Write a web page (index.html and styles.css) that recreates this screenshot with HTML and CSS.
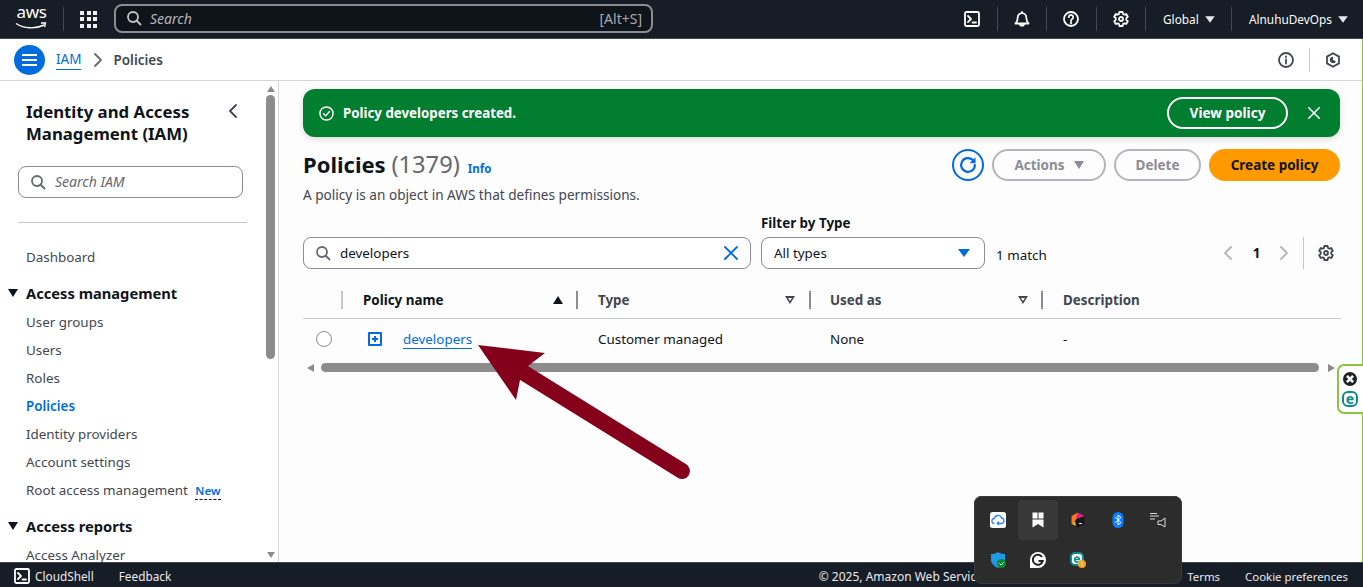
FILE: index.html
```html
<!DOCTYPE html>
<html lang="en">
<head>
<meta charset="utf-8">
<title>Policies | IAM</title>
<link rel="stylesheet" href="styles.css">
</head>
<body>
<svg class="sprite" aria-hidden="true">
  <symbol id="i-search" viewBox="0 0 16 16"><circle cx="7" cy="7" r="5"/><path d="m14.5 14.5-4-4"/></symbol>
  <symbol id="i-close" viewBox="0 0 16 16"><path d="m2 2 12 12M14 2 2 14"/></symbol>
  <symbol id="i-gear" viewBox="0 0 16 16"><path d="M6.4 1h3.2l.4 2 1.3.7 1.9-.7 1.6 2.8-1.5 1.3v1.8l1.5 1.3-1.6 2.8-1.9-.7-1.3.7-.4 2H6.4l-.4-2-1.3-.7-1.9.7-1.6-2.8 1.5-1.3V7.1L1.2 5.8 2.8 3l1.9.7L6 3z"/><circle cx="8" cy="8" r="2"/></symbol>
  <symbol id="i-shell" viewBox="0 0 16 16"><rect x="1" y="1" width="14" height="14" rx="1.5"/><path d="m4 5 3 3-3 3M8.5 11.5H12"/></symbol>
  <symbol id="i-bell" viewBox="0 0 16 16"><path d="M8 2.2A4.3 4.3 0 0 0 3.7 6.5c0 3-1.2 5-2.2 6h13c-1-1-2.200-3-2.200-6A4.300 4.300 0 0 0 8 2.200ZM8 2.200V1M6 12.700a2 2 0 0 0 4 0"/></symbol>
  <symbol id="i-help" viewBox="0 0 16 16"><circle cx="8" cy="8" r="7"/><path d="M5.800 6.200a2.200 2.200 0 1 1 3.400 1.800C8.400 8.500 8 9 8 10M8 11.500v1"/></symbol>
  <symbol id="i-info" viewBox="0 0 16 16"><circle cx="8" cy="8" r="7"/><path d="M8 7.500v4M8 4.300v.7"/></symbol>
  <symbol id="i-hex" viewBox="0 0 16 16"><path d="M8 1.200 14 4.600v6.800l-6 3.400-6-3.400V4.600z"/><path class="fill" d="M8 4.800A3.200 3.200 0 1 0 11 9.200L8 8z"/></symbol>
  <symbol id="i-left" viewBox="0 0 16 16"><path d="m11 2-6 6 6 6"/></symbol>
  <symbol id="i-right" viewBox="0 0 16 16"><path d="m5 2 6 6-6 6"/></symbol>
  <symbol id="i-refresh" viewBox="0 0 16 16"><path d="M13.500 8a5.500 5.500 0 1 1-1.800-4.100L13 5"/><path class="fill" d="M14 1.800v4.700H9.300z"/></symbol>
</svg>

<header class="topnav">
  <div class="aws-logo">
    <span class="aws-word">aws</span>
    <svg class="aws-smile" viewBox="0 0 32 8"><path d="M1 1.500c8 5.500 20 5.500 28 1.500"/><path d="M26 1h4.500l-1 4"/></svg>
  </div>
  <span class="nav-sep"></span>
  <div class="apps-grid" aria-label="Services">
    <i></i><i></i><i></i><i></i><i></i><i></i><i></i><i></i><i></i>
  </div>
  <div class="nav-search">
    <svg class="ico ico-16 st-light"><use href="#i-search"/></svg>
    <span class="nav-search-text">Search</span>
    <span class="nav-search-key">[Alt+S]</span>
  </div>
  <nav class="nav-actions">
    <div class="nav-cell"><svg class="ico ico-16 st-white"><use href="#i-shell"/></svg></div>
    <div class="nav-cell sep"><svg class="ico ico-16 st-white"><use href="#i-bell"/></svg></div>
    <div class="nav-cell sep"><svg class="ico ico-16 st-white"><use href="#i-help"/></svg></div>
    <div class="nav-cell sep"><svg class="ico ico-16 st-white"><use href="#i-gear"/></svg></div>
    <div class="nav-cell sep nav-text nav-region"><span>Global</span><b class="caret caret-white"></b></div>
    <div class="nav-cell sep nav-text nav-user"><span>AlnuhuDevOps</span><b class="caret caret-white"></b></div>
  </nav>
</header>

<div class="shell">
  <div class="crumbbar">
    <button class="menu-btn" aria-label="Open navigation"><i></i><i></i><i></i></button>
    <a class="crumb-link">IAM</a>
    <svg class="ico ico-16 st-grey crumb-chevron"><use href="#i-right"/></svg>
    <span class="crumb-current">Policies</span>
    <div class="crumb-tools">
      <svg class="ico ico-16 st-dark"><use href="#i-info"/></svg>
      <span class="crumb-sep"></span>
      <svg class="ico ico-16 st-dark"><use href="#i-hex"/></svg>
    </div>
  </div>

  <div class="workspace">
    <aside class="sidebar">
      <div class="side-scroll">
        <div class="side-head">
          <h2>Identity and Access Management (IAM)</h2>
          <svg class="ico ico-16 st-dark"><use href="#i-left"/></svg>
        </div>
        <div class="side-search">
          <svg class="ico ico-16 st-grey"><use href="#i-search"/></svg>
          <span>Search IAM</span>
        </div>
        <hr class="side-rule">
        <a class="side-link first">Dashboard</a>
        <div class="side-section"><b class="caret caret-dark"></b>Access management</div>
        <a class="side-link">User groups</a>
        <a class="side-link">Users</a>
        <a class="side-link">Roles</a>
        <a class="side-link active">Policies</a>
        <a class="side-link">Identity providers</a>
        <a class="side-link">Account settings</a>
        <a class="side-link">Root access management <span class="badge-new">New</span></a>
        <div class="side-section second"><b class="caret caret-dark"></b>Access reports</div>
        <a class="side-link">Access Analyzer</a>
      </div>
      <div class="vscroll">
        <b class="tri tri-up"></b>
        <span class="vthumb"></span>
        <b class="tri tri-down"></b>
      </div>
    </aside>

    <main class="content">
      <div class="flash">
        <svg class="flash-check" viewBox="0 0 16 16"><circle cx="8" cy="8" r="7"/><path d="m4.800 8.200 2.300 2.300 4.100-4.600"/></svg>
        <span class="flash-text">Policy developers created.</span>
        <button class="flash-btn">View policy</button>
        <svg class="ico ico-14 st-white"><use href="#i-close"/></svg>
      </div>

      <div class="page-head">
        <div class="page-title">
          <h1>Policies <span class="count">(1379)</span></h1>
          <a class="info-link">Info</a>
        </div>
        <div class="page-actions">
          <button class="refresh"><svg class="ico ico-20 st-blue"><use href="#i-refresh"/></svg></button>
          <button class="btn btn-off btn-actions">Actions <b class="caret caret-grey"></b></button>
          <button class="btn btn-off btn-delete">Delete</button>
          <button class="btn btn-primary">Create policy</button>
        </div>
      </div>
      <p class="page-desc">A policy is an object in AWS that defines permissions.</p>

      <div class="filters">
        <div class="filter-search">
          <svg class="ico ico-16 st-grey"><use href="#i-search"/></svg>
          <span class="filter-value">developers</span>
          <svg class="ico ico-16 st-blue"><use href="#i-close"/></svg>
        </div>
        <div class="filter-type">
          <label>Filter by Type</label>
          <div class="select"><span>All types</span><b class="caret caret-blue"></b></div>
        </div>
        <span class="matches">1 match</span>
        <div class="pager">
          <svg class="ico ico-16 st-pale"><use href="#i-left"/></svg>
          <b>1</b>
          <svg class="ico ico-16 st-pale"><use href="#i-right"/></svg>
          <span class="pager-sep"></span>
          <svg class="ico ico-16 st-dark"><use href="#i-gear"/></svg>
        </div>
      </div>

      <div class="table">
        <div class="t-row t-head">
          <div class="t-cell t-sel"></div>
          <div class="t-cell sep-light spread sorted">Policy name <b class="tri tri-sort"></b></div>
          <div class="t-cell sepl spread">Type <b class="sort-open"></b></div>
          <div class="t-cell sepl spread">Used as <b class="sort-open"></b></div>
          <div class="t-cell sepl">Description</div>
        </div>
        <div class="t-row t-body">
          <div class="t-cell t-sel"><span class="radio"></span></div>
          <div class="t-cell name-cell"><span class="expand"><i></i></span><a class="policy-link">developers</a></div>
          <div class="t-cell">Customer managed</div>
          <div class="t-cell">None</div>
          <div class="t-cell">-</div>
        </div>
      </div>
      <div class="hscroll">
        <b class="tri tri-left"></b>
        <span class="hthumb"></span>
        <b class="tri tri-right"></b>
      </div>
    </main>
  </div>
</div>

<footer class="footer">
  <svg class="ico ico-16 st-white"><use href="#i-shell"/></svg>
  <span class="foot-shell">CloudShell</span>
  <span class="foot-feedback">Feedback</span>
  <span class="foot-copy">© 2025, Amazon Web Services, Inc. or its affiliates.</span>
  <span class="foot-privacy">Privacy</span>
  <span class="foot-terms">Terms</span>
  <span>Cookie preferences</span>
</footer>

<svg class="big-arrow" viewBox="0 0 225 145" aria-hidden="true">
  <path d="M8 5 75 13 58 26 50 40 46 60z" class="arrow-head"/>
  <path d="M54 33 212 131" class="arrow-tail"/>
</svg>

<div class="eset-tab">
  <span class="eset-close"><svg viewBox="0 0 16 16"><path d="m4.500 4.500 7 7M11.500 4.500l-7 7"/></svg></span>
  <span class="eset-e">e</span>
</div>

<div class="tray">
  <div class="tray-cell"><svg viewBox="0 0 16 16"><rect width="16" height="16" rx="2.500" fill="#fff"/><path d="M4.500 11.500a2.500 2.500 0 0 1-.2-5A3.800 3.800 0 0 1 11.600 6a2.800 2.800 0 0 1 .2 5.500H7.500m1.500-2-1.700 2 1.700 1.500" fill="none" stroke="#3b82f6" stroke-width="1.300"/></svg></div>
  <div class="tray-cell on"><svg viewBox="0 0 16 16"><path d="M2.500 .5h5v6h-5zM8.500 .5h5v6h-5zM2.500 7.500h11V15.500L8 12l-5.500 3.500z" fill="#fff"/></svg></div>
  <div class="tray-cell"><svg viewBox="0 0 16 16"><path d="m8 .5 6.500 3.500v8L8 15.500 1.500 12V4z" fill="#17171c"/><path d="M1.500 4 8 .5 7 6 5 9 1.500 12z" fill="#ff7a1e"/><path d="M8 .5 14.500 4 8 6.500 6 5z" fill="#e0218a"/><path d="M1.500 12 5 9 6 14z" fill="#f5b21e"/><path d="M9 11.500h3" stroke="#fff"/></svg></div>
  <div class="tray-cell"><svg viewBox="0 0 16 16"><rect x="2.500" width="11" height="16" rx="5.500" fill="#0a7cff"/><path d="m5 5 6 5.500L8 13V3l3 2.500L5 11" fill="none" stroke="#fff"/></svg></div>
  <div class="tray-cell"><svg viewBox="0 0 16 16"><path d="M0 1.500h7M0 4h9M0 7h5" stroke="#ddd" fill="none"/><path d="M8 9h3l4-3v9l-4-2.500H8z" stroke="#ddd" fill="none"/></svg></div>
  <div class="tray-cell"><svg viewBox="0 0 16 16"><path d="M8 0c2 1.500 4 2 7 2v6c0 3.500-3 6-7 8-4-2-7-4.500-7-8V2c3 0 5-.5 7-2z" fill="#1e9be8"/><circle cx="11.500" cy="11.500" r="4.500" fill="#0f8a2e"/><path d="m9.500 11.500 1.500 1.500 2.500-2.500" stroke="#fff" fill="none"/></svg></div>
  <div class="tray-cell"><svg viewBox="0 0 16 16"><path d="M8 0a8 8 0 0 1 0 16H0V8a8 8 0 0 1 8-8z" fill="#fff"/><path d="M12 5a5 5 0 1 0 .700 4H8.500" fill="none" stroke="#222" stroke-width="2"/></svg></div>
  <div class="tray-cell"><svg viewBox="0 0 16 16"><rect x="1" y="1" width="12" height="12" rx="4" fill="#fff" stroke="#0b8a94" stroke-width="2"/><path d="M4.500 7.500h5a2.500 2.500 0 1 0-.8 2" fill="none" stroke="#0b8a94" stroke-width="1.600"/><circle cx="12" cy="12" r="4" fill="#f5a623"/><path d="M12 10v2.500M12 13.500v.7" stroke="#fff"/></svg></div>
</div>
</body>
</html>
```

FILE: styles.css
```css
* { box-sizing: border-box; }
html, body { height: 100%; }
body {
  margin: 0;
  display: flex;
  flex-direction: column;
  height: 587px;
  overflow: hidden;
  position: relative;
  font-family: "Noto Sans", "Open Sans", sans-serif;
  font-size: 13.4px;
  color: #0f141a;
  background: #fff;
}
.sprite { display: none; }
button { font-family: inherit; margin: 0; padding: 0; background: none; border: 0; }
h1, h2, p { margin: 0; }

.ico { flex: none; fill: none; stroke-width: 1.8; stroke-linecap: round; stroke-linejoin: round; display: block; }
.ico-14 { width: 14px; height: 14px; }
.ico-16 { width: 16px; height: 16px; }
.ico-20 { width: 20px; height: 20px; }
.st-white { stroke: #fff; }
.st-light { stroke: #c6c6cd; }
.st-grey { stroke: #656871; }
.st-dark { stroke: #424650; color: #424650; }
.st-pale { stroke: #b4b4bb; }
.st-blue { stroke: #006ce0; color: #006ce0; }
.fill { fill: currentColor; stroke: none; }

.caret { display: inline-block; width: 0; height: 0; border-left: 5px solid transparent; border-right: 5px solid transparent; border-top: 7px solid #fff; }
.caret-white { border-top-color: #e8e8ec; }
.caret-dark { border-top-color: #0f141a; }
.caret-grey { border-top-color: #8c8c94; }
.caret-blue { border-left-width: 6px; border-right-width: 6px; border-top: 8px solid #006ce0; }

/* top nav */
.topnav {
  flex: none;
  height: 39px;
  display: flex;
  align-items: center;
  background: #161d26;
  border-bottom: 1px solid #424650;
  color: #fbfbfb;
  padding-left: 15px;
}
.aws-logo { width: 33px; height: 28px; position: relative; margin-top: -2px; }
.aws-word { display: block; font-size: 17px; line-height: 20px; letter-spacing: -0.3px; color: #fff; margin-top: -2px; text-align: center; }
.aws-smile { display: block; width: 32px; height: 8px; fill: none; stroke: #fff; stroke-width: 1.4; }
.nav-sep { width: 1px; height: 24px; background: #424650; margin-left: 15px; }
.apps-grid { display: grid; grid-template-columns: repeat(3, 4px); grid-auto-rows: 4px; gap: 2.500px; margin-left: 16px; width: 17px; }
.apps-grid i { background: #f0f0f0; }
.nav-search {
  margin: 0 0 2px 17px;
  width: 539px;
  height: 29px;
  display: flex;
  align-items: center;
  background: #0f141a;
  border: 2px solid #8c8c94;
  border-radius: 8px;
  padding: 0 9px 0 10px;
}
.nav-search-text { font-style: italic; color: #b4b4bb; margin-left: 8px; font-size: 14px; }
.nav-search-key { margin-left: auto; color: #a9a9b2; font-size: 14px; }
.nav-actions { margin-left: auto; display: flex; align-items: center; height: 100%; }
.nav-cell { width: 49.500px; height: 24px; display: flex; align-items: center; justify-content: center; }
.nav-cell.sep { border-left: 1px solid #424650; }
.nav-text { justify-content: flex-start; font-size: 11.800px; gap: 5px; }
.nav-region { width: 86px; padding-left: 17px; }
.nav-user { width: 132px; padding-left: 17px; }
.nav-text .caret { transform: scale(.95); margin-left: 1px; }

/* wrapper with the thin green edge */
.shell { flex: 1; min-height: 0; display: flex; flex-direction: column; border-right: 1px solid #8bc53f; }

.crumbbar {
  flex: none;
  height: 42px;
  display: flex;
  align-items: center;
  padding: 0 21px 0 14px;
  border-bottom: 1px solid #d5d5da;
  background: #fff;
}
.menu-btn { width: 31px; height: 30px; border-radius: 50%; background: #006ce0; display: flex; flex-direction: column; justify-content: center; align-items: center; gap: 3px; }
.menu-btn i { display: block; width: 15px; height: 2px; background: #fff; }
.crumb-link { margin-left: 11px; color: #006ce0; font-size: 13.500px; line-height: 20px; border-bottom: 1px solid #006ce0; }
.crumb-chevron { margin: 0 7px 0 9px; }
.crumb-current { color: #424650; font-weight: 600; font-size: 13.500px; }
.crumb-tools { margin-left: auto; display: flex; align-items: center; gap: 15px; }
.crumb-sep { width: 1px; height: 24px; background: #c6c6cd; }

.workspace { flex: 1; min-height: 0; display: flex; }

/* sidebar */
.sidebar { flex: none; width: 279px; border-right: 1px solid #d5d5da; display: flex; background: #fff; }
.side-scroll { width: 264px; overflow: hidden; padding-left: 18px; }
.side-head { display: flex; justify-content: space-between; padding: 20px 23px 0 8px; }
.side-head h2 { font-size: 16.800px; line-height: 22px; font-weight: 700; width: 180px; }
.side-head .ico { margin-top: 2px; }
.side-search {
  width: 225px;
  height: 32px;
  margin-top: 21px;
  display: flex;
  align-items: center;
  gap: 9px;
  padding: 0 0 2px 11px;
  border: 1px solid #8c8c94;
  border-radius: 8px;
  color: #656871;
  font-style: italic;
  font-size: 14px;
}
.side-search .ico { margin-top: 2px; }
.side-rule { width: 229px; margin: 24px 0 0; border: 0; border-top: 1px solid #c6c6cd; }
.side-link { display: block; height: 28px; line-height: 28px; margin-left: 8px; color: #424650; white-space: nowrap; }
.side-link.first { margin-top: 20px; }
.side-link.active { color: #006ce0; font-weight: 600; }
.side-section { display: flex; align-items: center; height: 22px; margin: 11px 0 4px -10px; font-size: 14.700px; font-weight: 700; white-space: nowrap; }
.side-section .caret { margin-right: 8px; border-left-width: 5.500px; border-right-width: 5.500px; border-top-width: 8px; }
.badge-new { display: inline-block; margin-left: 4px; color: #006ce0; font-weight: 600; font-size: 11.500px; line-height: 16px; border-bottom: 1px dashed #0f141a; }

.vscroll { flex: none; width: 13px; display: flex; flex-direction: column; align-items: center; padding-top: 5px; }
.vthumb { width: 9px; height: 264px; margin-top: 3px; background: #8c8c8c; border-radius: 5px; }
.tri { display: block; width: 0; height: 0; border-style: solid; border-color: transparent; }
.tri-up { border-width: 0 4.500px 6px; border-bottom-color: #8c8c8c; }
.tri-down { border-width: 6px 4.500px 0; border-top-color: #8c8c8c; margin-top: auto; margin-bottom: 4px; }
.tri-left { border-width: 4.500px 7px 4.500px 0; border-right-color: #8c8c8c; margin-left: 4px; }
.tri-right { border-width: 4.500px 0 4.500px 7px; border-left-color: #8c8c8c; }
.tri-sort { border-width: 0 5.500px 8px; border-bottom-color: #0f141a; }

/* content */
.content { flex: 1; min-width: 0; padding: 8px 22px 0 24px; background: #fdfdfd; overflow: hidden; }
.flash {
  height: 48px;
  display: flex;
  align-items: center;
  padding: 0 19px 0 16px;
  background: #027e31;
  border-radius: 12px;
  color: #fff;
  box-shadow: 0 2px 6px rgba(0, 0, 0, .15);
}
.flash-check { width: 15px; height: 15px; fill: none; stroke: #fff; stroke-width: 1.500; stroke-linecap: round; stroke-linejoin: round; }
.flash-text { font-weight: 700; margin-left: 9px; font-size: 13.300px; }
.flash-btn { margin-left: auto; margin-right: 19px; width: 121px; height: 32px; padding-bottom: 2px; border: 2px solid #fff; border-radius: 16px; color: #fff; font-weight: 700; font-size: 13.600px; }

.page-head { display: flex; justify-content: space-between; align-items: center; margin-top: 12px; height: 32px; }
.page-title { display: flex; align-items: baseline; gap: 8px; margin-top: -2px; }
h1 { font-size: 22px; line-height: 32px; font-weight: 700; }
.count { font-weight: 400; color: #656871; font-size: 23.700px; }
.info-link { color: #006ce0; font-weight: 700; font-size: 11.500px; }
.page-actions { display: flex; align-items: center; gap: 8px; }
.refresh { width: 32px; height: 32px; border: 2px solid #006ce0; border-radius: 50%; display: flex; align-items: center; justify-content: center; }
.btn { height: 32px; border-radius: 16px; font-weight: 700; font-size: 13.500px; }
.btn-off { border: 2px solid #b4b4bb; color: #8c8c94; background: none; }
.btn-actions { width: 114px; display: flex; align-items: center; justify-content: center; gap: 9px; }
.btn-actions .caret { border-left-width: 5.500px; border-right-width: 5.500px; border-top-width: 8px; }
.btn-delete { width: 87px; }
.btn-primary { width: 131px; background: #ff9900; color: #0f141a; }
.page-desc { margin-top: 4px; line-height: 20px; color: #424650; font-size: 13.600px; }

.filters { display: flex; align-items: flex-end; margin-top: 18px; height: 46px; }
.filter-search {
  width: 448px;
  height: 32px;
  display: flex;
  align-items: center;
  padding: 0 11px;
  border: 1px solid #8c8c94;
  border-radius: 8px;
  background: #fff;
}
.filter-value { margin-left: 9px; margin-right: auto; color: #0f141a; }
.filter-type { margin-left: 10px; width: 224px; }
.filter-type label { display: block; font-weight: 700; line-height: 14px; margin-bottom: 7px; color: #0f141a; }
.select { height: 32px; display: flex; align-items: center; justify-content: space-between; padding: 0 14px 0 12px; border: 1px solid #8c8c94; border-radius: 8px; background: #fff; }
.matches { margin-left: 11px; height: 32px; line-height: 36px; }
.pager { margin-left: auto; height: 32px; display: flex; align-items: center; padding-right: 6px; }
.pager b { width: 40px; padding-left: 1px; text-align: center; font-weight: 700; }
.pager-sep { width: 1px; height: 32px; background: #c6c6cd; margin: 0 14px 0 11px; }

/* table */
.table { margin-top: 15px; margin-right: -1px; }
.t-row { display: grid; grid-template-columns: 38px 235px 233px 232px 1fr; }
.t-head { height: 35px; border-bottom: 1px solid #c6c6cd; align-items: center; font-weight: 700; color: #424650; padding-bottom: 3px; }
.t-head .t-cell:nth-child(2) { color: #0f141a; }
.t-cell { display: flex; align-items: center; padding-left: 22px; height: 18px; }
.t-row .t-cell:nth-child(4) { padding-left: 21px; }
.t-sel { padding-left: 0; }
.sepl { box-shadow: inset 2px 0 0 0 #8c8c94; }
.sep-light { box-shadow: inset 2px 0 0 0 #c6c6cd; }
.spread { justify-content: space-between; padding-right: 14px; }
.t-row .t-cell:nth-child(4).spread { padding-right: 13px; }
.sorted { padding-right: 13px; }
.sort-open { width: 0; height: 0; border-left: 5.500px solid transparent; border-right: 5.500px solid transparent; border-top: 8px solid #424650; position: relative; }
.sort-open::after { content: ""; position: absolute; left: -2.500px; top: -6px; border-left: 2.500px solid transparent; border-right: 2.500px solid transparent; border-top: 3.500px solid #fdfdfd; }
.t-body { height: 40px; align-items: center; }
.t-body .t-cell { color: #0f141a; }
.t-body .t-sel { padding-left: 0; }
.radio { width: 16px; height: 16px; margin-left: 13px; border: 1px solid #8c8c94; border-radius: 50%; background: #fff; }
.t-body .name-cell { padding-left: 27px; }
.expand { width: 14px; height: 14px; border: 2px solid #006ce0; border-radius: 1px; position: relative; }
.expand i { position: absolute; left: 2px; top: 2px; width: 6px; height: 6px; background:
  linear-gradient(#006ce0, #006ce0) center / 6px 2px no-repeat,
  linear-gradient(#006ce0, #006ce0) center / 2px 6px no-repeat; }
.policy-link { margin: 2px 0 0 21px; color: #006ce0; line-height: 17px; border-bottom: 1px solid #006ce0; }

.hscroll { display: flex; align-items: center; height: 11px; margin-top: 3px; margin-right: 1px; }
.hthumb { width: 998px; height: 9px; margin: 0 9px 0 7px; background: #8c8c8c; border-radius: 5px; }

/* footer */
.footer {
  flex: none;
  height: 25px;
  display: flex;
  align-items: center;
  padding: 2px 15px 0 14px;
  background: #161d26;
  border-top: 1px solid #424650;
  color: #eaeaee;
  font-size: 11.400px;
}
.foot-shell { margin-left: 5px; font-size: 11.800px; }
.foot-feedback { margin-left: 25px; font-size: 11.800px; }
.foot-copy { margin-left: auto; font-size: 12px; }
.foot-privacy { margin-left: 24px; }
.foot-terms { margin-left: 24px; margin-right: 25px; }

/* overlays */
.big-arrow { position: absolute; left: 470px; top: 340px; width: 225px; height: 145px; }
.arrow-head { fill: #85001b; }
.arrow-tail { stroke: #85001b; stroke-width: 16; stroke-linecap: round; fill: none; }

.eset-tab {
  position: absolute;
  right: 0;
  top: 364px;
  width: 26px;
  height: 50px;
  padding: 6px 0 0 4px;
  background: #fff;
  border: 2px solid #8bc53f;
  border-right: 0;
  border-radius: 7px 0 0 7px;
}
.eset-close { display: block; width: 14px; height: 14px; border-radius: 50%; background: #1f2228; }
.eset-close svg { display: block; width: 14px; height: 14px; fill: none; stroke: #fff; stroke-width: 3; }
.eset-e { display: block; width: 16px; height: 16px; margin: 5px 0 0 -1px; border: 2px solid #0b8a94; border-radius: 6px; color: #0b8a94; font-size: 14px; font-weight: 700; line-height: 11px; text-align: center; }

.tray {
  position: absolute;
  left: 974px;
  top: 496px;
  width: 208px;
  height: 88px;
  padding: 4px;
  display: grid;
  grid-template-columns: repeat(5, 40px);
  grid-auto-rows: 40px;
  background: #2c2c2c;
  border-radius: 8px;
  box-shadow: inset 0 0 0 1px #3a3a3a;
}
.tray-cell { display: flex; align-items: center; justify-content: center; border-radius: 4px; }
.tray-cell.on { background: #383838; }
.tray-cell svg { width: 16px; height: 16px; display: block; }
```
